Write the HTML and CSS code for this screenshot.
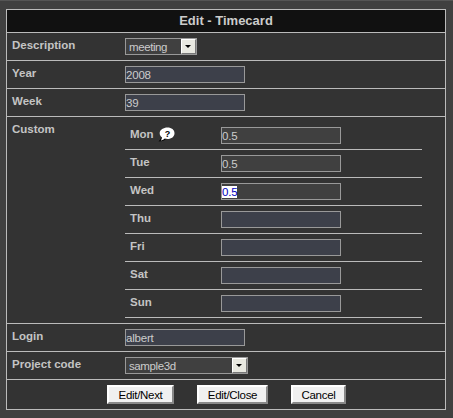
FILE: index.html
```html
<!DOCTYPE html>
<html lang="en">
<head>
    <meta charset="UTF-8">
    <title>Edit - Timecard</title>
    <link rel="stylesheet" href="styles.css">
</head>
<body>
    <form class="edit-form">
        <div class="title">Edit - Timecard</div>

        <div class="row">
            <label class="row-label">Description</label>
            <div class="select-box desc-select">
                <select><option>meeting</option></select>
                <span class="select-arrow"></span>
            </div>
        </div>
        <div class="row">
            <label class="row-label">Year</label>
            <input type="text" value="2008">
        </div>
        <div class="row">
            <label class="row-label">Week</label>
            <input type="text" value="39">
        </div>

        <div class="row custom-row">
            <label class="row-label">Custom</label>
            <div class="days">
                <div class="day">
                    <label class="day-label">Mon
                        <svg class="help-icon" width="17" height="15" viewBox="0 0 17 15">
                            <path d="M3 9.500C3 11.500 2.200 13 .5 14.500C3.500 14.500 6 13.500 7.500 12.500L5 9Z" fill="#000"/>
                            <path d="M9.500 .5C13.500 .5 16.500 2.800 16.500 6.200S13.500 12 9.500 12C8.500 12 7.600 11.900 6.800 11.600C5.800 12.600 4.500 13.300 2.800 13.500C3.600 12.500 3.900 11.500 3.900 10.400C2.500 9.400 1.700 7.900 1.700 6.200C1.700 2.800 5.500 .5 9.500 .5Z" fill="#fff"/>
                            <text x="9.500" y="9.500" class="help-mark">?</text>
                        </svg>
                    </label>
                    <input type="text" class="grey" value="0.5">
                </div>
                <div class="day">
                    <label class="day-label">Tue</label>
                    <input type="text" class="grey" value="0.5">
                </div>
                <div class="day">
                    <label class="day-label">Wed</label>
                    <input type="text" class="grey" id="wedHours" value="0.5">
                </div>
                <div class="day">
                    <label class="day-label">Thu</label>
                    <input type="text">
                </div>
                <div class="day">
                    <label class="day-label">Fri</label>
                    <input type="text">
                </div>
                <div class="day">
                    <label class="day-label">Sat</label>
                    <input type="text">
                </div>
                <div class="day">
                    <label class="day-label">Sun</label>
                    <input type="text">
                </div>
            </div>
        </div>

        <div class="row">
            <label class="row-label">Login</label>
            <input type="text" value="albert">
        </div>
        <div class="row">
            <label class="row-label">Project code</label>
            <div class="select-box project-select">
                <select><option>sample3d</option></select>
                <span class="select-arrow"></span>
            </div>
        </div>

        <div class="buttons">
            <button type="button" class="btn-next">Edit/Next</button>
            <button type="button" class="btn-close">Edit/Close</button>
            <button type="button" class="btn-cancel">Cancel</button>
        </div>
    </form>

    <script>
// The Wed field is shown with its text selected
document.getElementById("wedHours").select();
    </script>
</body>
</html>
```

FILE: styles.css
```css
html, body {
    height: 100%;
}
body {
    margin: 0;
    padding: 8px 0 0 6px;
    box-sizing: border-box;
    overflow: hidden;
    background-color: #404040;
    border-top: 1px solid #555;
    font-family: "Liberation Sans", Arial, sans-serif;
}
.edit-form {
    width: 440px;
    box-sizing: border-box;
    background-color: #333;
    border: 1px solid #bbb;
}
.title {
    height: 22px;
    line-height: 22px;
    text-align: center;
    font-size: 13px;
    font-weight: bold;
    color: #ccc;
    background-color: #111;
    border-bottom: 1px solid #bbb;
}
.row {
    display: flex;
    align-items: flex-start;
    height: 22px;
    padding-top: 5px;
    border-bottom: 1px solid #bbb;
}
.custom-row {
    height: auto;
    padding-bottom: 5px;
}
.row-label {
    flex: none;
    width: 113px;
    padding-left: 5px;
    line-height: 14px;
    font-size: 11.5px;
    font-weight: bold;
    color: #c4c4c4;
}
input {
    flex: none;
    width: 120px;
    height: 17px;
    box-sizing: border-box;
    margin: 0;
    padding: 0;
    font-family: inherit;
    font-size: 11.5px;
    letter-spacing: -0.2px;
    color: #ccc;
    background-color: #3d404a;
    border: 1px solid #999;
    outline: none;
}
input.grey {
    background-color: #404040;
}
input::selection {
    color: #0000c0;
    background-color: #fff;
}
.days {
    width: 297px;
}
.day {
    display: flex;
    align-items: flex-start;
    height: 22px;
    padding-top: 5px;
    border-bottom: 1px solid #bbb;
}
.day-label {
    flex: none;
    display: flex;
    align-items: flex-start;
    gap: 5px;
    width: 91px;
    padding-left: 5px;
    line-height: 14px;
    font-size: 11.5px;
    font-weight: bold;
    color: #c4c4c4;
}
.help-icon {
    margin-left: -1px;
}
.help-mark {
    font-size: 9px;
    font-weight: bold;
    text-anchor: middle;
    fill: #000;
}
.select-box {
    position: relative;
    height: 17px;
}
.desc-select {
    width: 72px;
}
.project-select {
    width: 123px;
}
select {
    display: block;
    width: 100%;
    height: 100%;
    box-sizing: border-box;
    margin: 0;
    padding: 0 0 0 3px;
    appearance: none;
    font-family: inherit;
    font-size: 11.5px;
    letter-spacing: -0.4px;
    color: #ccc;
    background-color: #404040;
    border: 1px solid #999;
    border-radius: 0;
}
.select-arrow {
    position: absolute;
    top: 1px;
    right: 1px;
    width: 15px;
    height: 15px;
    box-sizing: border-box;
    background-color: #e8e8e0;
    border: 1px solid;
    border-color: #fff #777 #777 #fff;
}
.select-arrow::after {
    content: "";
    position: absolute;
    top: 5px;
    left: 3px;
    border-style: solid;
    border-width: 3px 3px 0;
    border-color: #000 transparent transparent;
}
.buttons {
    display: flex;
    gap: 23px;
    height: 24px;
    padding: 5px 0 0 100px;
}
button {
    height: 19px;
    box-sizing: border-box;
    padding: 0;
    font-family: inherit;
    font-size: 11.5px;
    letter-spacing: -0.3px;
    color: #000;
    background-color: #f0f0f0;
    border: 2px solid;
    border-color: #fff #888 #888 #fff;
    cursor: pointer;
}
.btn-next {
    width: 67px;
}
.btn-close {
    width: 71px;
}
.btn-cancel {
    width: 55px;
}
```
